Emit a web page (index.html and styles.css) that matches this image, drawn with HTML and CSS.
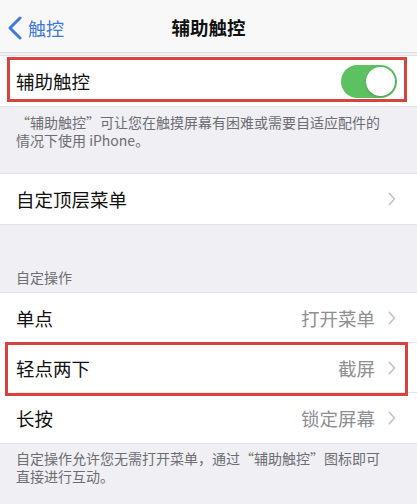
FILE: index.html
```html
<!DOCTYPE html>
<html lang="zh-CN">
<head>
<meta charset="utf-8">
<link rel="stylesheet" href="styles.css">
</head>
<body>
<div class="screen">
  <header class="nav">
    <div class="back">
      <svg class="back-icon" width="16" height="24" viewBox="0 0 16 24"><polyline points="13,2 3,12 13,22" fill="none" stroke="#3f7ad8" stroke-width="3" stroke-linecap="round" stroke-linejoin="round"/></svg>
      <span>触控</span>
    </div>
    <div class="title">辅助触控</div>
  </header>

  <div class="group first">
    <div class="row marked mark-a">
      <span class="label">辅助触控</span>
      <span class="toggle"><span class="knob"></span></span>
    </div>
  </div>
  <p class="footer f1">“辅助触控”可让您在触摸屏幕有困难或需要自适应配件的情况下使用 iPhone。</p>

  <div class="group g2">
    <div class="row">
      <span class="label">自定顶层菜单</span>
      <span class="accessory"><svg class="chev" width="8" height="14" viewBox="0 0 8 14"><polyline points="1.5,1.5 6.5,7 1.5,12.5" fill="none" stroke="#c4c4c9" stroke-width="1.8" stroke-linecap="round" stroke-linejoin="round"/></svg></span>
    </div>
  </div>

  <div class="section-header">自定操作</div>
  <div class="group">
    <div class="row sep">
      <span class="label">单点</span>
      <span class="accessory"><span class="value">打开菜单</span><svg class="chev" width="8" height="14" viewBox="0 0 8 14"><polyline points="1.5,1.5 6.5,7 1.5,12.5" fill="none" stroke="#c4c4c9" stroke-width="1.8" stroke-linecap="round" stroke-linejoin="round"/></svg></span>
    </div>
    <div class="row sep marked mark-b">
      <span class="label">轻点两下</span>
      <span class="accessory"><span class="value">截屏</span><svg class="chev" width="8" height="14" viewBox="0 0 8 14"><polyline points="1.5,1.5 6.5,7 1.5,12.5" fill="none" stroke="#c4c4c9" stroke-width="1.8" stroke-linecap="round" stroke-linejoin="round"/></svg></span>
    </div>
    <div class="row">
      <span class="label">长按</span>
      <span class="accessory"><span class="value">锁定屏幕</span><svg class="chev" width="8" height="14" viewBox="0 0 8 14"><polyline points="1.5,1.5 6.5,7 1.5,12.5" fill="none" stroke="#c4c4c9" stroke-width="1.8" stroke-linecap="round" stroke-linejoin="round"/></svg></span>
    </div>
  </div>
  <p class="footer f2">自定操作允许您无需打开菜单，通过“辅助触控”图标即可直接进行互动。</p>
</div>
</body>
</html>
```

FILE: styles.css
```css
* { box-sizing: border-box; }
html, body {
  margin: 0;
  padding: 0;
  background: #efeff4;
}
body {
  font-family: "Noto Sans CJK SC", "Noto Sans", sans-serif;
  color: #111;
  width: 417px;
  height: 504px;
  overflow: hidden;
}
.screen {
  display: flex;
  flex-direction: column;
}
.nav {
  position: relative;
  height: 53px;
  background: #f8f8f8;
  border-bottom: 1px solid #d9d9dd;
  display: flex;
  align-items: center;
  justify-content: center;
}
.back {
  position: absolute;
  left: 7px;
  top: 16px;
  display: flex;
  align-items: center;
  gap: 5px;
  color: #3f7ad8;
  font-size: 18px;
  line-height: 24px;
}
.back-icon { display: block; }
.title {
  font-size: 18.5px;
  font-weight: 600;
  line-height: 24px;
  color: #111;
  margin-top: 2px;
}
.group {
  background: #fff;
  border-top: 1px solid #e2e2e6;
  border-bottom: 1px solid #e2e2e6;
}
.group.first { margin-top: 2px; }
.group.g2 { margin-top: 23px; }
.row {
  position: relative;
  height: 50px;
  display: flex;
  align-items: center;
  justify-content: space-between;
  padding: 0 21px 0 16px;
}
.row.sep::before {
  content: "";
  position: absolute;
  left: 16px;
  right: 0;
  bottom: 0;
  height: 1px;
  background: #e6e6ea;
}
.label {
  font-size: 18.5px;
  line-height: 24px;
  color: #111;
}
.accessory {
  display: flex;
  align-items: center;
  gap: 13px;
}
.value {
  font-size: 18.5px;
  line-height: 24px;
  color: #8e8e93;
}
.chev { display: block; }
.toggle {
  position: relative;
  width: 56px;
  height: 33px;
  border-radius: 17px;
  background: #5cc160;
  margin-right: -1px;
}
.knob {
  position: absolute;
  right: 2px;
  top: 2px;
  width: 29px;
  height: 29px;
  border-radius: 50%;
  background: #fff;
  box-shadow: 0 1px 3px rgba(0,0,0,0.2);
}
.marked::after {
  content: "";
  position: absolute;
  border: 3px solid #d8433f;
  pointer-events: none;
}
.mark-a::after { left: 7px; right: 10px; top: 1px; bottom: 4px; }
.mark-b::after { left: 5px; right: 9px; top: -1px; bottom: -3px; }
.footer {
  margin: 0;
  padding: 6px 30px 0 16px;
  font-size: 14px;
  line-height: 18px;
  color: #6d6d72;
}
.f1 { height: 43px; }
.f2 { padding-top: 5px; }
.section-header {
  margin-top: 43px;
  padding: 0 16px 6px;
  font-size: 14px;
  line-height: 18px;
  color: #6d6d72;
}
```
